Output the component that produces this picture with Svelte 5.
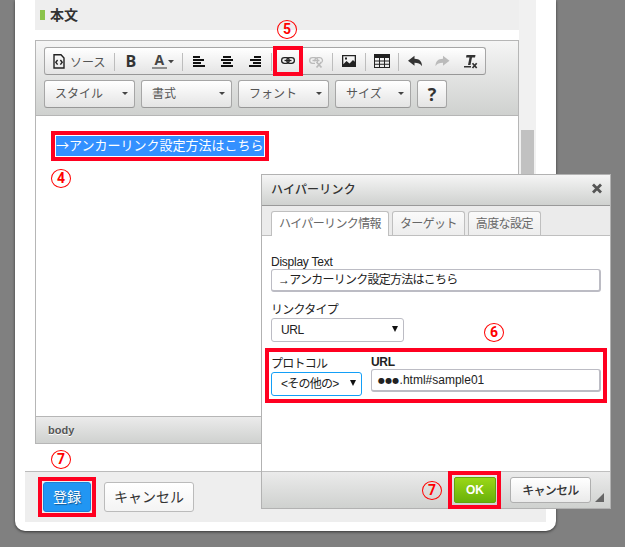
<script lang="ts">
  const combos = [
    { name: "スタイル", width: 91 },
    { name: "書式", width: 91 },
    { name: "フォント", width: 91 },
    { name: "サイズ", width: 76 },
  ];
  const tabs = ["ハイパーリンク情報", "ターゲット", "高度な設定"];
  let activeTab = 0;

  // x, y, w, h of the red frames
  const frames = [
    { x: 273, y: 46, w: 30, h: 30, b: 4 },
    { x: 51, y: 131, w: 218, h: 30, b: 4 },
    { x: 265, y: 348, w: 342, h: 55, b: 4 },
    { x: 38, y: 477, w: 58, h: 40, b: 4 },
    { x: 448, y: 471, w: 53, h: 38, b: 4 },
  ];
  const steps = [
    { n: 5, x: 277, y: 20 },
    { n: 4, x: 51, y: 169 },
    { n: 6, x: 484, y: 323 },
    { n: 7, x: 51, y: 450 },
    { n: 7, x: 422, y: 481 },
  ];
</script>

<div class="screen">
  <div class="card">
    <div class="scroll">
      <div class="main">
        <div class="heading"><i></i><b>本文</b></div>

        <div class="editor">
          <div class="toolbar">
            <div class="group">
              <span class="source">
                <svg width="12" height="15" viewBox="0 0 12 15" fill="none" stroke="#222">
                  <path d="M1 .8H8L11 4V14H1Z" stroke-width="1.4" />
                  <path d="M4.6 6L2.8 8.3L4.6 10.6M7.4 6L9.2 8.3L7.4 10.6" stroke-width="1.4" />
                </svg>
                <span>ソース</span>
              </span>
              <svg class="icons" width="378" height="26" viewBox="0 0 378 26">
                <g stroke="#bdbdbd">
                  <path d="M7.5 5V23M75.5 5V23M164.5 5V23M225.5 5V23M258.5 5V23M291.5 5V23" />
                </g>
                <text class="bold" x="18.5" y="18.8">B</text>
                <text class="color" x="47.5" y="16.5">A</text>
                <path d="M45 19H60V21H45Z" fill="#8e8e8e" />
                <path d="M61 12H67L64 15.3Z" fill="#444" />
                <g fill="#111">
                  <path d="M86 8h7v2h-7zM86 11h11v2h-11zM86 14h8v2h-8zM86 17h12v2h-12z" />
                  <path d="M116 8h8v2h-8zM114 11h12v2h-12zM116 14h8v2h-8zM114 17h12v2h-12z" />
                  <path d="M147 8h7v2h-7zM143 11h11v2h-11zM146 14h8v2h-8zM142 17h12v2h-12z" />
                </g>
                <g fill="none" stroke="#222" stroke-width="1.3">
                  <rect x="174.6" y="9.7" width="7.6" height="5.6" rx="2.8" />
                  <rect x="179.8" y="9.7" width="7.6" height="5.6" rx="2.8" />
                  <path d="M177.5 12.5H184.5" />
                </g>
                <g fill="none" stroke="#bababa" stroke-width="1.3">
                  <path d="M208 15.3H205.5a2.8 2.8 0 0 1 0-5.6h2.6a2.8 2.8 0 0 1 2 4.6M208 13.5a2.8 2.8 0 0 1 2.5-3.8h2.2a2.8 2.8 0 0 1 2.2 4.5M205.5 12.5H212.5" />
                  <path d="M209.5 14L214.5 19.5M214.5 14L209.5 19.5" stroke-width="1.8" />
                </g>
                <path fill="#222" fill-rule="evenodd" d="M235 7h14v12h-14zM236.3 8.3v8l3.2-3.3 3 2.6 3.5-3.6 1.7 1.7V8.3zM238 9.5h2v2h-2z" />
                <path fill="#222" fill-rule="evenodd" d="M267 6h16v14h-16zM268 10v2.4h4v-2.4zM273 10v2.4h4v-2.4zM278 10v2.4h4v-2.4zM268 13.4v2.4h4v-2.4zM273 13.4v2.4h4v-2.4zM278 13.4v2.4h4v-2.4zM268 16.8v2.2h4v-2.2zM273 16.8v2.2h4v-2.2zM278 16.8v2.2h4v-2.2z" />
                <path fill="#333" d="M301 12.8L307.5 7.8V10.8C312.5 10.8 315 13.5 315 18.3C313.3 15.6 311 14.8 307.5 14.8V17.8Z" />
                <path fill="#bbb" d="M342.5 12.8L336 7.8V10.8C331 10.8 328.5 13.5 328.5 18.3C330.2 15.6 332.5 14.8 336 14.8V17.8Z" />
                <path d="M359.5 7H368.5L368 9.5H365L363.5 17H361L362.5 9.5H359Z" fill="#333" />
                <path d="M357 18H364V19.5H357Z" fill="#333" />
                <path d="M365.5 15.2L369.7 20M369.7 15.2L365.5 20" stroke="#333" stroke-width="1.7" />
              </svg>
            </div>

            <div class="combos">
              {#each combos as combo}
                <div class="combo" style="width: {combo.width}px">
                  <span>{combo.name}</span>
                  <i class="arrow"></i>
                </div>
              {/each}
              <div class="combo help">?</div>
            </div>
          </div>

          <div class="content">
            <span class="marked">→アンカーリンク設定方法はこちら</span>
          </div>

          <div class="path">body</div>
        </div>
      </div>

      <div class="track"><div class="thumb"></div></div>
    </div>

    <div class="actions">
      <button class="submit">登録</button>
      <button class="cancel">キャンセル</button>
    </div>
  </div>

  <div class="dialog">
    <div class="title">
      <span>ハイパーリンク</span>
      <svg width="12" height="12" viewBox="0 0 12 12">
        <path d="M2 1.5L10 9.5M10 1.5L2 9.5" stroke="#555" stroke-width="2.8" />
      </svg>
    </div>
    <div class="tabs">
      {#each tabs as tab, idx}
        <button class="tab" class:selected={idx === activeTab} on:click={() => (activeTab = idx)}>{tab}</button>
      {/each}
    </div>

    <div class="form">
      <div class="label latin">Display Text</div>
      <div class="field">→アンカーリンク設定方法はこちら</div>
      <div class="label type">リンクタイプ</div>
      <div class="field select"><span>URL</span><i></i></div>
      <div class="row">
        <div class="protocol">
          <div class="label">プロトコル</div>
          <div class="field select focus"><span>&lt;その他の&gt;</span><i></i></div>
        </div>
        <div class="url">
          <div class="label strong">URL</div>
          <div class="field"><span class="dots">●●●</span>.html#sample01</div>
        </div>
      </div>
    </div>

    <div class="buttons">
      <button class="ok">OK</button>
      <button class="close">キャンセル</button>
      <svg class="grip" width="9" height="9" viewBox="0 0 9 9"><path d="M9 0V9H0Z" fill="#666" /></svg>
    </div>
  </div>

  {#each frames as f}
    <div class="frame" style="left: {f.x}px; top: {f.y}px; width: {f.w}px; height: {f.h}px; border-width: {f.b}px"></div>
  {/each}
  {#each steps as s}
    <div class="step" style="left: {s.x}px; top: {s.y}px">{s.n}</div>
  {/each}
</div>

<style>
  :global(body) {
    background: #808080;
  }
  .screen {
    position: relative;
    width: 625px;
    height: 547px;
    overflow: hidden;
    background: #808080;
    font-family: "Liberation Sans", "Noto Sans CJK JP", sans-serif;
    font-size: 12px;
    color: #333;
  }
  .screen *,
  .frame,
  .step {
    box-sizing: border-box;
  }
  button {
    font-family: inherit;
    padding: 0;
    white-space: nowrap;
  }
  .card {
    width: 541px;
    height: 531px;
    margin-left: 15px;
    padding: 0 10px;
    background: #fff;
    border-radius: 0 0 10px 10px;
    box-shadow: 0 1px 3px rgba(0, 0, 0, 0.6);
  }
  .scroll {
    display: flex;
    height: 471px;
    padding: 0 10px;
  }
  .main {
    width: 484px;
  }
  .heading {
    display: flex;
    align-items: center;
    gap: 5px;
    height: 30px;
    padding-left: 5px;
    background: #eee;
    font-size: 14px;
    line-height: 30px;
  }
  .heading i {
    width: 5px;
    height: 10px;
    background: #8bc34a;
  }
  .track {
    width: 17px;
    padding: 130px 2px 0;
    background: #f1f1f1;
  }
  .thumb {
    height: 180px;
    background: #c1c1c1;
  }

  .editor {
    display: flex;
    flex-direction: column;
    height: 404px;
    margin-top: 10px;
    border: 1px solid #b6b6b6;
  }
  .toolbar {
    height: 75px;
    padding: 6px 8px 0;
    border-bottom: 1px solid #b6b6b6;
    background: linear-gradient(#f5f5f5, #cfd1cf);
  }
  .group {
    display: flex;
    width: 442px;
    height: 28px;
    border: 1px solid #a6a6a6;
    border-bottom-color: #979797;
    border-radius: 3px;
    background: linear-gradient(#fff, #e4e4e4);
  }
  .source {
    display: flex;
    flex: none;
    align-items: center;
    gap: 5px;
    width: 62px;
    padding-left: 8px;
    color: #555;
    white-space: nowrap;
  }
  .icons {
    flex: none;
  }
  .bold {
    font: bold 16px "Open Sans", sans-serif;
    fill: #333;
  }
  .color {
    font: bold 14px "Open Sans", sans-serif;
    fill: #444;
  }
  .combos {
    display: flex;
    gap: 6px;
    margin-top: 5px;
  }
  .combo {
    display: flex;
    align-items: center;
    justify-content: space-between;
    height: 28px;
    padding: 0 6px 1px 10px;
    border: 1px solid #a6a6a6;
    border-bottom-color: #979797;
    border-radius: 3px;
    background: linear-gradient(#fff, #e4e4e4);
    color: #555;
    white-space: nowrap;
  }
  .combo span {
    padding-bottom: 2px;
  }
  .arrow {
    border: 3px solid transparent;
    border-top-color: #444;
    border-bottom: 0;
  }
  .help {
    justify-content: center;
    width: 30px;
    padding: 0;
    font: bold 18px "Open Sans", sans-serif;
    color: #333;
  }
  .content {
    flex: 1;
    padding: 20px 20px 0;
    background: #fff;
  }
  .marked {
    display: block;
    width: 208px;
    height: 20px;
    background: #3390ff;
    color: #fff;
    font-family: "Noto Sans CJK JP", sans-serif;
    font-size: 13px;
    line-height: 18px;
    white-space: nowrap;
  }
  .path {
    height: 27px;
    padding-left: 12px;
    border-top: 1px solid #b6b6b6;
    background: linear-gradient(#ebebeb, #cfd1cf);
    color: #555;
    font-size: 11px;
    font-weight: bold;
    line-height: 27px;
    text-shadow: 0 1px 0 #fff;
  }

  .actions {
    display: flex;
    gap: 13px;
    height: 51px;
    padding: 10px 18px;
    border-top: 1px solid #bbb;
    background: #eee;
  }
  .submit {
    width: 48px;
    height: 30px;
    padding-bottom: 3px;
    border: 1px solid #1b80d8;
    border-radius: 3px;
    background: #2196f3;
    color: #fff;
    font-size: 14px;
    text-shadow: 1px 1px 1px #145a95;
  }
  .cancel {
    width: 90px;
    height: 30px;
    padding-bottom: 3px;
    border: 1px solid #bbb;
    border-radius: 3px;
    background: linear-gradient(#fff, #f4f4f4);
    color: #333;
    font-size: 14px;
  }

  .dialog {
    position: absolute;
    left: 261px;
    top: 174px;
    display: flex;
    flex-direction: column;
    width: 350px;
    height: 335px;
    border: 1px solid #b2b2b2;
    background: #fff;
  }
  .title {
    display: flex;
    align-items: center;
    justify-content: space-between;
    height: 31px;
    padding: 0 7px 3px 9px;
    border-bottom: 1px solid #999;
    background: linear-gradient(#f5f5f5, #cfd1cf);
    font-size: 12px;
    font-weight: 500;
    letter-spacing: 0.2px;
  }
  .tabs {
    display: flex;
    gap: 3px;
    height: 30px;
    padding: 5px 9px 0;
    background: linear-gradient(#ebebeb 29px, #bfbfbf 29px);
  }
  .tab {
    height: 24px;
    padding: 0 7px;
    border: 1px solid #bfbfbf;
    border-bottom: 0;
    border-radius: 3px 3px 0 0;
    background: linear-gradient(#fafafa, #ededed);
    color: #676767;
    font-size: 12px;
    line-height: 20px;
    letter-spacing: -0.62px;
  }
  .tab.selected {
    height: 25px;
    background: #fff;
  }
  .form {
    flex: 1;
    padding: 18px 9px 0;
    color: #222;
    letter-spacing: -0.75px;
  }
  .label {
    height: 15px;
    line-height: 15px;
    white-space: nowrap;
  }
  .latin {
    line-height: 17px;
    letter-spacing: -0.25px;
  }
  .field {
    height: 23px;
    padding: 0 6px;
    border: 1px solid #bcbcc4;
    border-width: 1px 2px 2px 1px;
    border-radius: 3px;
    background: #fff;
    line-height: 20px;
    white-space: nowrap;
  }
  .type {
    margin-top: 11px;
  }
  .select {
    display: flex;
    align-items: center;
    justify-content: space-between;
    width: 133px;
    height: 24px;
    padding: 0 5px 0 9px;
    border-width: 1px;
    letter-spacing: -0.4px;
  }
  .select i {
    margin-bottom: 2px;
    border: 3.5px solid transparent;
    border-top: 6px solid #111;
    border-bottom: 0;
  }
  .row {
    display: flex;
    gap: 9px;
    margin-top: 13px;
  }
  .protocol {
    width: 91px;
    padding-top: 2px;
  }
  .focus {
    width: 91px;
    border-color: #139ff7;
    letter-spacing: -0.75px;
  }
  .url {
    flex: 1;
  }
  .url .field {
    letter-spacing: 0;
  }
  .strong {
    height: 14px;
    font-weight: bold;
    letter-spacing: -0.3px;
  }
  .dots {
    font-family: "DejaVu Sans", sans-serif;
    font-size: 8px;
    letter-spacing: 0.2px;
    vertical-align: 1px;
  }
  .buttons {
    display: flex;
    align-items: flex-start;
    height: 37px;
    padding: 5px 5px 0 192px;
    border-top: 1px solid #bfbfbf;
    background: linear-gradient(#ebebeb, #cfd1cf);
  }
  .ok {
    width: 42px;
    height: 26px;
    border: 1px solid #62a60a;
    border-radius: 2px;
    background: linear-gradient(#9ad717, #69b10b);
    color: #fff;
    font-size: 12px;
    font-weight: bold;
  }
  .close {
    width: 81px;
    height: 26px;
    margin: 0 4px 0 14px;
    padding-bottom: 1px;
    border: 1px solid #afafaf;
    border-radius: 3px;
    background: linear-gradient(#fff, #eaeaea);
    color: #333;
    font-size: 12px;
    font-weight: 500;
    letter-spacing: -0.75px;
  }
  .grip {
    flex: none;
    margin-top: 16px;
  }

  .frame {
    position: absolute;
    border: 4px solid #ff0020;
  }
  .step {
    position: absolute;
    width: 20px;
    height: 19px;
    border: 1px solid #f00;
    border-radius: 50%;
    background: transparent;
    color: #f00;
    font: bold 14px/17px "Roboto", sans-serif;
    text-align: center;
  }
</style>
